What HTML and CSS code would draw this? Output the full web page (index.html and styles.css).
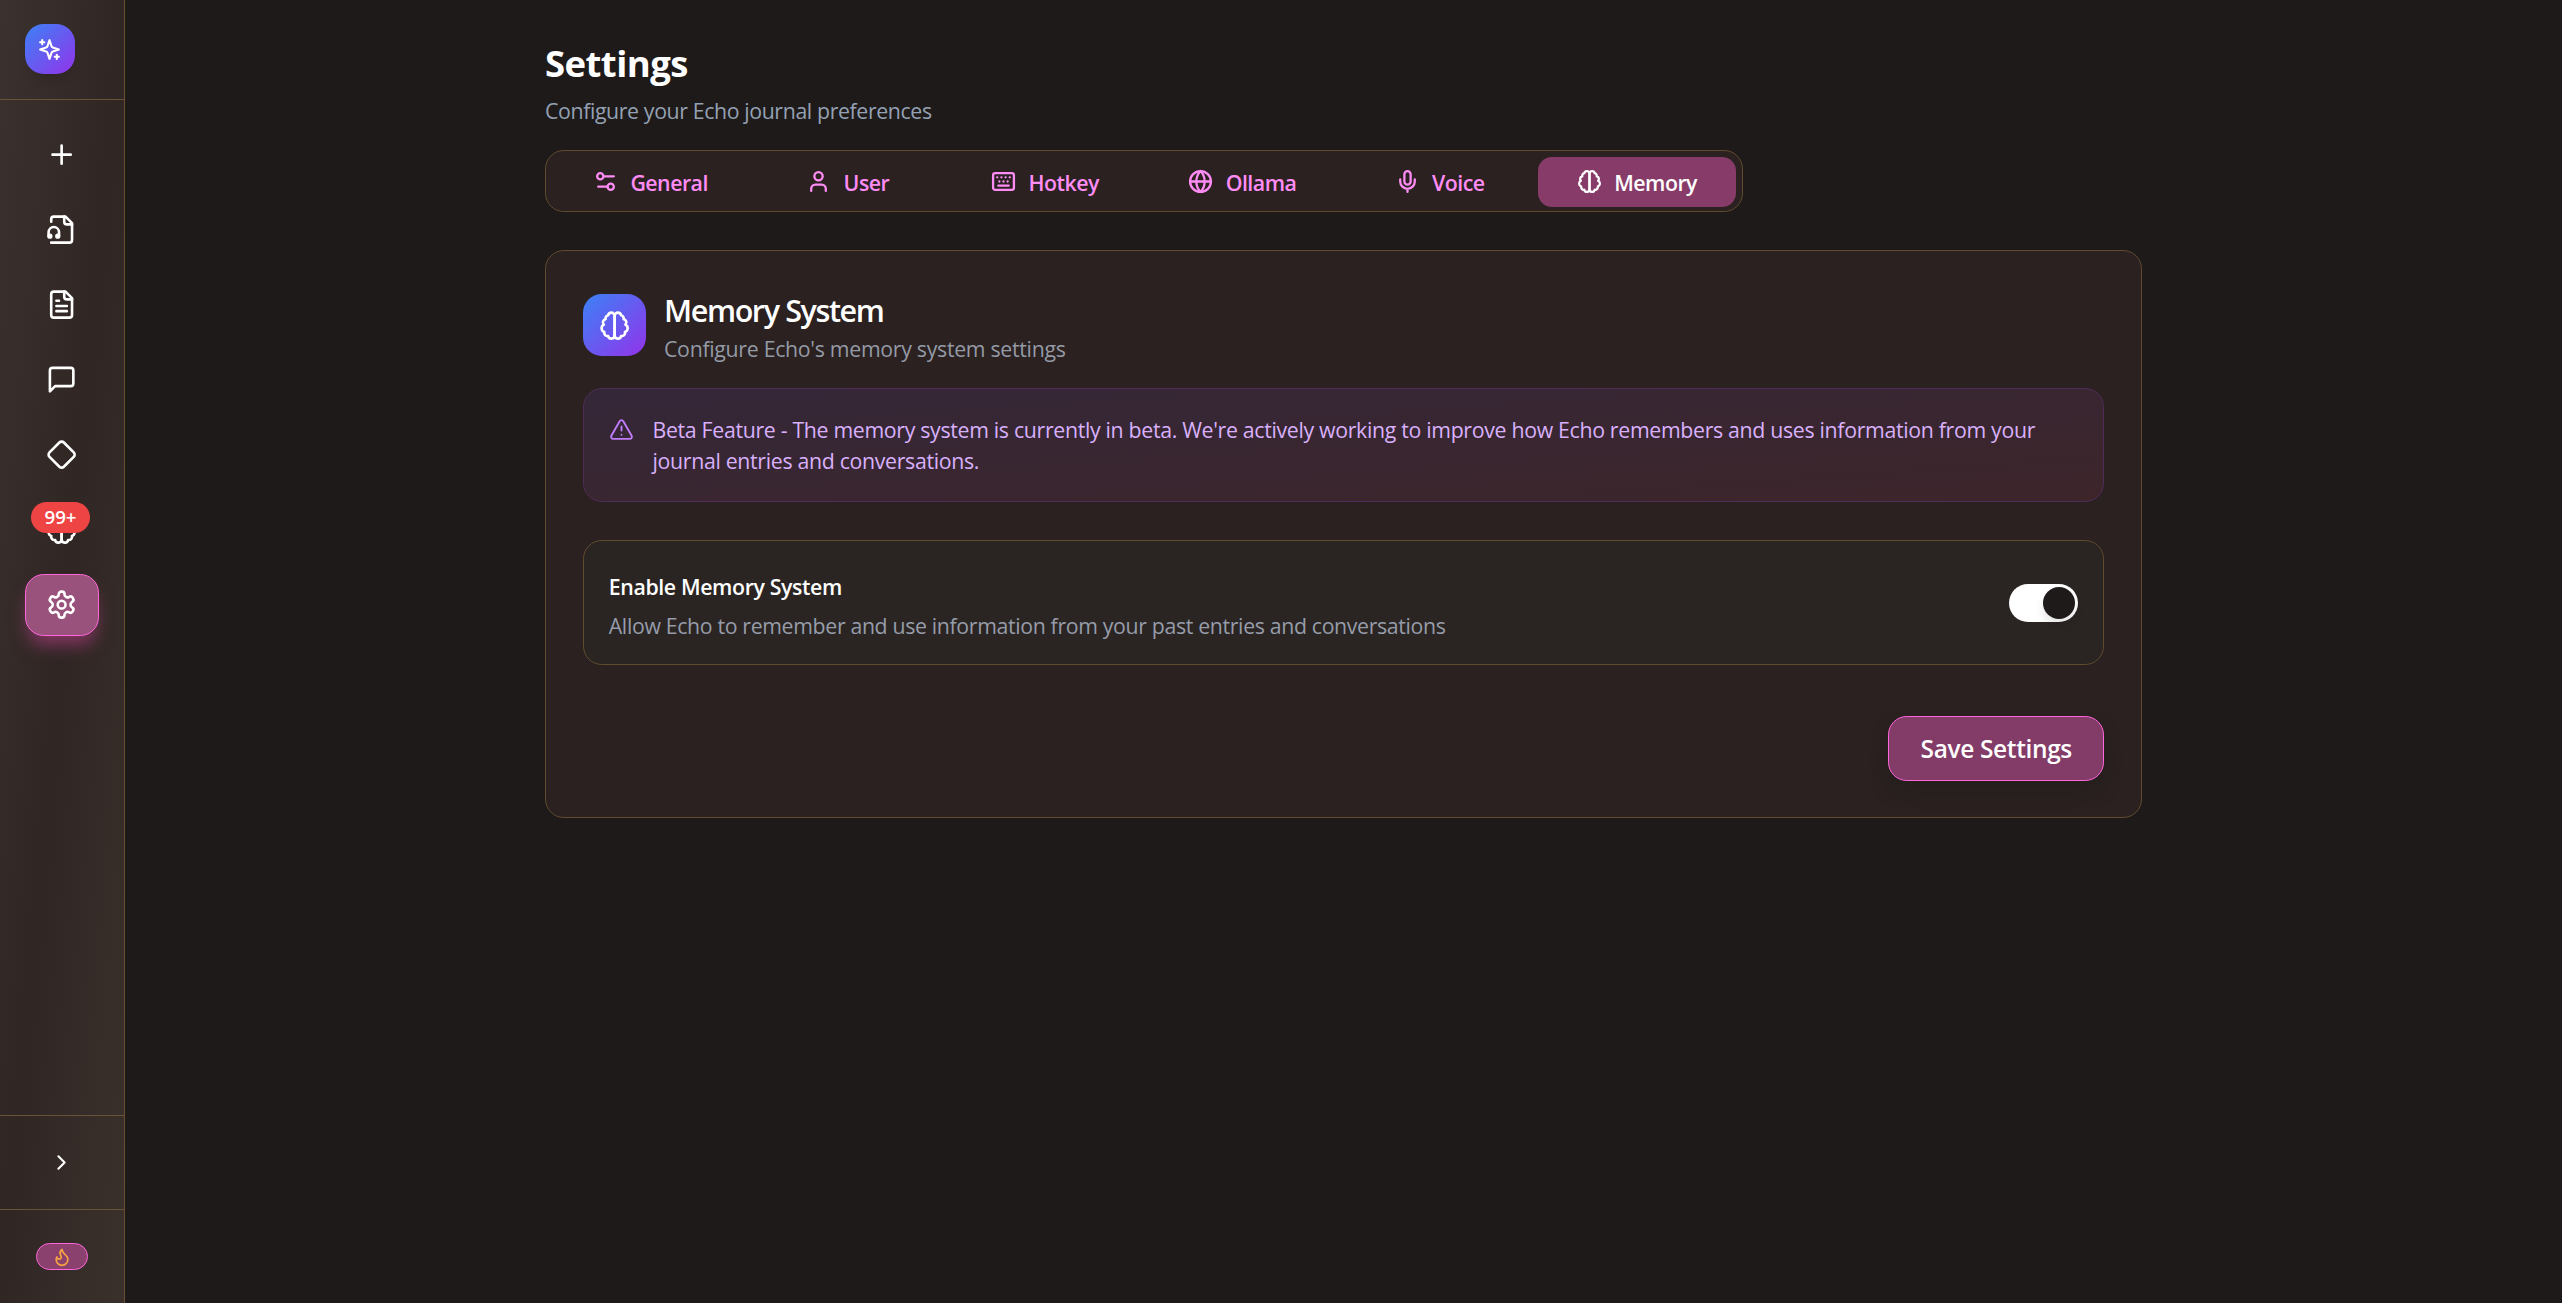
FILE: index.html
```html
<!DOCTYPE html>
<html lang="en">
<head>
<meta charset="utf-8">
<title>Echo – Settings</title>
<link rel="stylesheet" href="styles.css">
</head>
<body>
<svg class="defs" aria-hidden="true">
  <symbol id="brain" viewBox="0 0 24 24"><path d="M9.5 2A2.5 2.5 0 0 1 12 4.5v15a2.5 2.5 0 0 1-4.96.44 2.5 2.5 0 0 1-2.96-3.08 3 3 0 0 1-.34-5.58 2.5 2.5 0 0 1 1.32-4.24 2.5 2.5 0 0 1 1.98-3A2.5 2.5 0 0 1 9.5 2Z"/><path d="M14.5 2A2.5 2.5 0 0 0 12 4.5v15a2.5 2.5 0 0 0 4.96.44 2.5 2.5 0 0 0 2.96-3.08 3 3 0 0 0 .34-5.58 2.5 2.5 0 0 0-1.32-4.24 2.5 2.5 0 0 0-1.98-3A2.5 2.5 0 0 0 14.5 2Z"/></symbol>
</svg>
<div class="app">
  <aside class="sidebar">
    <div class="brand">
      <div class="logo"><svg class="icon" viewBox="0 0 24 24"><path d="m12 3-1.912 5.813a2 2 0 0 1-1.275 1.275L3 12l5.813 1.912a2 2 0 0 1 1.275 1.275L12 21l1.912-5.813a2 2 0 0 1 1.275-1.275L21 12l-5.813-1.912a2 2 0 0 1-1.275-1.275L12 3Z"/><path d="M5 3v4M19 17v4M3 5h4M17 19h4"/></svg></div>
    </div>
    <nav class="nav">
      <a class="nav-item"><svg class="icon icon-lg" viewBox="0 0 24 24"><path d="M5 12h14M12 5v14"/></svg></a>
      <a class="nav-item"><svg class="icon icon-lg" viewBox="0 0 24 24"><path d="M4 22h14a2 2 0 0 0 2-2V7l-5-5H6a2 2 0 0 0-2 2v2"/><path d="M14 2v4a2 2 0 0 0 2 2h4"/><path d="M2 17v-3a4 4 0 0 1 8 0v3"/><circle cx="9" cy="17" r="1"/><circle cx="3" cy="17" r="1"/></svg></a>
      <a class="nav-item"><svg class="icon icon-lg" viewBox="0 0 24 24"><path d="M15 2H6a2 2 0 0 0-2 2v16a2 2 0 0 0 2 2h12a2 2 0 0 0 2-2V7Z"/><path d="M14 2v4a2 2 0 0 0 2 2h4M10 9H8M16 13H8M16 17H8"/></svg></a>
      <a class="nav-item"><svg class="icon icon-lg" viewBox="0 0 24 24"><path d="M21 15a2 2 0 0 1-2 2H7l-4 4V5a2 2 0 0 1 2-2h14a2 2 0 0 1 2 2z"/></svg></a>
      <a class="nav-item"><svg class="icon icon-lg" viewBox="0 0 24 24"><path d="M2.7 10.3a2.41 2.41 0 0 0 0 3.41l7.59 7.59a2.41 2.41 0 0 0 3.41 0l7.59-7.59a2.41 2.41 0 0 0 0-3.41l-7.59-7.59a2.41 2.41 0 0 0-3.41 0Z"/></svg></a>
      <a class="nav-item"><svg class="icon icon-lg"><use href="#brain"/></svg><span class="badge">99+</span></a>
      <a class="nav-item active"><svg class="icon icon-lg" viewBox="0 0 24 24"><path d="M12.22 2h-.44a2 2 0 0 0-2 2v.18a2 2 0 0 1-1 1.73l-.43.25a2 2 0 0 1-2 0l-.15-.08a2 2 0 0 0-2.73.73l-.22.38a2 2 0 0 0 .73 2.73l.15.1a2 2 0 0 1 1 1.72v.51a2 2 0 0 1-1 1.74l-.15.09a2 2 0 0 0-.73 2.73l.22.38a2 2 0 0 0 2.73.73l.15-.08a2 2 0 0 1 2 0l.43.25a2 2 0 0 1 1 1.73V20a2 2 0 0 0 2 2h.44a2 2 0 0 0 2-2v-.18a2 2 0 0 1 1-1.73l.43-.25a2 2 0 0 1 2 0l.15.08a2 2 0 0 0 2.73-.73l.22-.39a2 2 0 0 0-.73-2.73l-.15-.08a2 2 0 0 1-1-1.74v-.5a2 2 0 0 1 1-1.74l.15-.09a2 2 0 0 0 .73-2.73l-.22-.38a2 2 0 0 0-2.73-.73l-.15.08a2 2 0 0 1-2 0l-.43-.25a2 2 0 0 1-1-1.73V4a2 2 0 0 0-2-2z"/><circle cx="12" cy="12" r="3"/></svg></a>
    </nav>
    <div class="expand"><svg class="icon" viewBox="0 0 24 24"><path d="m9 18 6-6-6-6"/></svg></div>
    <div class="streak"><span class="pill"><svg class="icon icon-sm" viewBox="0 0 24 24"><path d="M8.5 14.5A2.5 2.5 0 0 0 11 12c0-1.38-.5-2-1-3-1.072-2.143-.224-4.054 2-6 .5 2.5 2 4.9 4 6.5 2 1.6 3 3.5 3 5.5a7 7 0 1 1-14 0c0-1.153.433-2.294 1-3a2.5 2.5 0 0 0 2.5 2.5z"/></svg></span></div>
  </aside>
  <main class="main">
    <h1 class="title">Settings</h1>
    <p class="subtitle">Configure your Echo journal preferences</p>
    <div class="tabs">
      <button class="tab"><svg class="icon" viewBox="0 0 24 24"><path d="M20 7h-9M14 17H5"/><circle cx="17" cy="17" r="3"/><circle cx="7" cy="7" r="3"/></svg><span>General</span></button>
      <button class="tab"><svg class="icon" viewBox="0 0 24 24"><path d="M19 21v-2a4 4 0 0 0-4-4H9a4 4 0 0 0-4 4v2"/><circle cx="12" cy="7" r="4"/></svg><span>User</span></button>
      <button class="tab"><svg class="icon" viewBox="0 0 24 24"><rect x="2" y="4" width="20" height="16" rx="2"/><path d="M10 8h.01M12 12h.01M14 8h.01M16 12h.01M18 8h.01M6 8h.01M7 16h10M8 12h.01"/></svg><span>Hotkey</span></button>
      <button class="tab"><svg class="icon" viewBox="0 0 24 24"><circle cx="12" cy="12" r="10"/><path d="M12 2a14.5 14.5 0 0 0 0 20 14.5 14.5 0 0 0 0-20M2 12h20"/></svg><span>Ollama</span></button>
      <button class="tab"><svg class="icon" viewBox="0 0 24 24"><path d="M12 2a3 3 0 0 0-3 3v7a3 3 0 0 0 6 0V5a3 3 0 0 0-3-3Z"/><path d="M19 10v2a7 7 0 0 1-14 0v-2M12 19v3"/></svg><span>Voice</span></button>
      <button class="tab selected"><svg class="icon"><use href="#brain"/></svg><span>Memory</span></button>
    </div>
    <section class="card">
      <header class="card-head">
        <div class="tile"><svg class="icon icon-lg"><use href="#brain"/></svg></div>
        <div class="card-text">
          <h2 class="card-title">Memory System</h2>
          <p class="card-sub">Configure Echo's memory system settings</p>
        </div>
      </header>
      <div class="notice">
        <svg class="icon" viewBox="0 0 24 24"><path d="m21.73 18-8-14a2 2 0 0 0-3.48 0l-8 14A2 2 0 0 0 4 21h16a2 2 0 0 0 1.73-3"/><path d="M12 9v4M12 17h.01"/></svg>
        <p>Beta Feature - The memory system is currently in beta. We're actively working to improve how Echo remembers and uses information from your journal entries and conversations.</p>
      </div>
      <div class="option">
        <div class="option-text">
          <h3 class="option-title">Enable Memory System</h3>
          <p class="option-desc">Allow Echo to remember and use information from your past entries and conversations</p>
        </div>
        <span class="switch"><span class="thumb"></span></span>
      </div>
      <div class="actions"><button class="save">Save Settings</button></div>
    </section>
  </main>
</div>
</body>
</html>
```
FILE: styles.css
```css
* { box-sizing: border-box; margin: 0; padding: 0; }
body {
  background: #1e1a19;
  color: #fff;
  font: 400 21.3px/31.25px "Open Sans", "Noto Sans", sans-serif;
  letter-spacing: -0.3px;
  overflow: hidden;
}
button { font: inherit; letter-spacing: inherit; color: inherit; border: 0; background: none; }
.defs { display: none; }
.app { display: flex; height: 1303px; }

.icon {
  width: 25px;
  height: 25px;
  flex: none;
  fill: none;
  stroke: currentColor;
  stroke-width: 2;
  stroke-linecap: round;
  stroke-linejoin: round;
}
.icon-lg { width: 31.25px; height: 31.25px; }
.icon-sm { width: 20px; height: 20px; }

.sidebar {
  width: 125px;
  flex: none;
  display: flex;
  flex-direction: column;
  border-right: 1px solid #6a4f2e;
  background: linear-gradient(to bottom right, #3b322f, #302624 50%, #3a312c);
}
.brand {
  height: 100px;
  padding: 24px 25px;
  border-bottom: 1px solid #6a5238;
}
.logo, .tile {
  display: flex;
  align-items: center;
  justify-content: center;
  background: linear-gradient(to bottom right, #3b82f6, #9333ea);
}
.logo {
  width: 50px;
  height: 50px;
  border-radius: 18.75px;
  box-shadow: 0 8px 12px -4px rgba(0, 0, 0, .15);
}
.logo .icon { position: relative; left: -0.5px; }
.nav {
  flex: 1;
  display: flex;
  flex-direction: column;
  gap: 13px;
  padding: 24px 25px 0 25px;
}
.nav-item {
  position: relative;
  height: 62px;
  padding-right: 1px;
  display: flex;
  align-items: center;
  justify-content: center;
  border-radius: 18.75px;
}
.nav-item.active {
  border: 1px solid #ff66dc;
  background: #98527b;
  box-shadow: 0 12px 18px -4px rgba(225, 70, 165, .5);
}
.badge {
  position: absolute;
  left: 6px;
  top: 3px;
  width: 59px;
  height: 31px;
  border-radius: 16px;
  background: #ef4444;
  text-align: center;
  font-size: 18.75px;
  font-weight: 600;
  line-height: 30px;
  letter-spacing: 0;
}
.expand, .streak {
  height: 94px;
  display: flex;
  align-items: center;
  justify-content: center;
  padding-right: 1px;
  border-top: 1px solid #6a5238;
}
.pill {
  width: 52px;
  height: 27px;
  display: flex;
  align-items: center;
  justify-content: center;
  border: 1px solid #ff66dc;
  border-radius: 14px;
  background: #8b416d;
  color: #f5a340;
}

.main { width: 1597px; margin-left: 420px; padding-top: 37.5px; }
.title { font-size: 36.5px; font-weight: 700; line-height: 50px; letter-spacing: -0.55px; }
.subtitle { margin-top: 7.5px; color: #94a1b4; letter-spacing: -0.38px; }
.tabs {
  width: 1198px;
  height: 62px;
  margin-top: 23.75px;
  padding: 5.75px 6.5px 5.75px 5.75px;
  display: grid;
  grid-template-columns: repeat(6, 1fr);
  border: 1px solid #614b2e;
  border-radius: 18.75px;
  background: #2a2120;
}
.tab {
  height: 50px;
  display: flex;
  align-items: center;
  justify-content: center;
  gap: 12.5px;
  border-radius: 14px;
  color: #ff8cf5;
  font-weight: 600;
  letter-spacing: -0.5px;
}
.tab span { padding-top: 2px; }
.tab .icon { stroke-width: 2.2; }
.tab.selected { background: #873b69; color: #fff; }

.card {
  margin-top: 38px;
  padding: 36.6px 36.75px;
  border: 1px solid #614b2e;
  border-radius: 18.75px;
  background: #2a2120;
}
.card-head { height: 100.7px; display: flex; gap: 18.25px; }
.tile { width: 63px; height: 62.5px; margin-top: 6.4px; border-radius: 18.75px; }
.card-text { padding-top: 3px; }
.card-title { font-size: 30.5px; font-weight: 600; line-height: 39px; letter-spacing: -1.38px; }
.card-sub { margin-top: 3.3px; color: #949aa6; }
.notice {
  height: 113.4px;
  padding: 26px 25px 0;
  display: flex;
  gap: 18.75px;
  border: 1px solid #4f2c57;
  border-radius: 18.75px;
  background: linear-gradient(to bottom right, #342738, #3d252a);
  color: #d8b0fb;
  line-height: 30.8px;
  letter-spacing: -0.32px;
}
.notice .icon { margin-top: 2px; color: #c07cfa; stroke-width: 1.8; }
.option {
  height: 125px;
  margin-top: 38.6px;
  padding: 0 25px;
  display: flex;
  align-items: center;
  justify-content: space-between;
  border: 1px solid #614b2e;
  border-radius: 18.75px;
  background: #2a2522;
}
.option-text { padding-top: 6px; }
.option-title { font-size: inherit; font-weight: 600; letter-spacing: -0.37px; }
.option-desc { margin-top: 7.8px; color: #969caa; letter-spacing: -0.35px; }
.switch {
  width: 69px;
  height: 38px;
  padding: 3px;
  display: flex;
  justify-content: flex-end;
  border-radius: 19px;
  background: #fff;
}
.thumb {
  width: 32px;
  height: 32px;
  border-radius: 50%;
  background: #1e1a19;
  box-shadow: 0 6px 10px rgba(0, 0, 0, .1);
}
.actions { margin-top: 50.4px; display: flex; justify-content: flex-end; }
.save {
  width: 216px;
  height: 65px;
  border: 1px solid #ff66dc;
  border-radius: 18.75px;
  background: #833b67;
  box-shadow: 0 12px 18px -4px rgba(30, 28, 22, .5);
  font-size: 24.5px;
  font-weight: 600;
  letter-spacing: -0.37px;
}
```
